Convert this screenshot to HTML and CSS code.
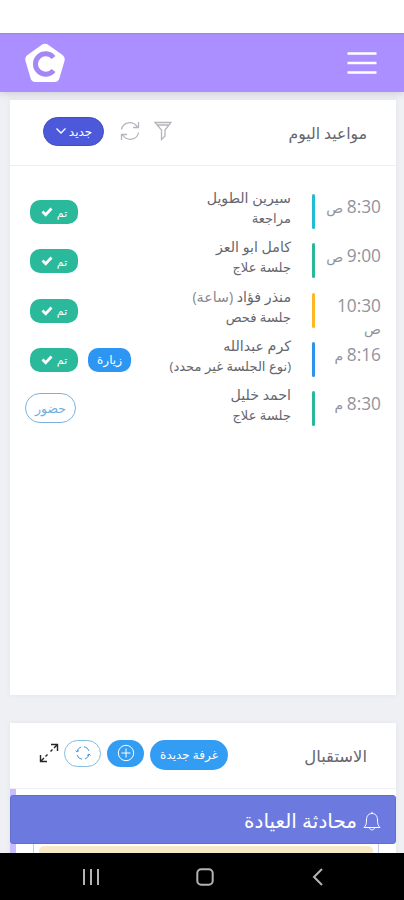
FILE: index.html
```html
<!DOCTYPE html>
<html lang="ar" dir="rtl">
<head>
<meta charset="utf-8">
<title>مواعيد اليوم</title>
<link rel="stylesheet" href="styles.css">
</head>
<body>
<header class="topbar">
  <svg class="menu" width="30" height="24" viewBox="0 0 30 24"><path d="M.5 2.500h29M.5 12h29M.5 21.500h29"/></svg>
  <svg class="logo" width="42" height="42" viewBox="0 0 42 42"><path class="shape" d="M17.500 3Q21 .5 24.500 3L38.500 13Q41.500 15.500 40.500 19L35.500 36Q34.500 40 30.500 40H11.500Q7.500 40 6.500 36L1.500 19Q.5 15.500 3.500 13Z"/><path class="letter" d="M29.500 15.500A10.200 10.200 0 1 0 29.500 28.500"/></svg>
</header>
<main>
  <section class="card appointments">
    <div class="card-head">
      <h2>مواعيد اليوم</h2>
      <div class="tools">
        <svg class="filter" width="20" height="20" viewBox="0 0 20 20"><path d="M2 1.500H18L12 9V15L8.500 18.500V9Z M4 4H16"/></svg>
        <svg class="reload" width="20" height="20" viewBox="0 0 20 20"><path d="M1.500 8.500C3 .5 13 -.5 17.500 6M18.500 1V6.500H13M18.500 11.500C17 19.500 7 20.500 2.500 14M1.500 19V13.500H7"/></svg>
        <button class="new"><span>جديد</span><svg width="12" height="8" viewBox="0 0 12 8"><path d="M1.500 1.500L6 6L10.500 1.500"/></svg></button>
      </div>
    </div>
    <div class="list">
      <div class="row"><div class="time"><b>8:30</b> ص</div><i class="bar cyan"></i><div class="info"><p class="name">سيرين الطويل</p><p>مراجعة</p></div><div class="actions"><span class="done">تم <svg width="12" height="10" viewBox="0 0 12 10"><path d="M1.500 4.500L4.700 7.700L10.500 1.500"/></svg></span></div></div>
      <div class="row"><div class="time"><b>9:00</b> ص</div><i class="bar green"></i><div class="info"><p class="name">كامل ابو العز</p><p>جلسة علاج</p></div><div class="actions"><span class="done">تم <svg width="12" height="10" viewBox="0 0 12 10"><path d="M1.500 4.500L4.700 7.700L10.500 1.500"/></svg></span></div></div>
      <div class="row"><div class="time"><b>10:30</b> ص</div><i class="bar amber"></i><div class="info"><p class="name">منذر فؤاد <em>(ساعة)</em></p><p>جلسة فحص</p></div><div class="actions"><span class="done">تم <svg width="12" height="10" viewBox="0 0 12 10"><path d="M1.500 4.500L4.700 7.700L10.500 1.500"/></svg></span></div></div>
      <div class="row"><div class="time"><b>8:16</b> م</div><i class="bar blue"></i><div class="info"><p class="name">كرم عبدالله</p><p>(نوع الجلسة غير محدد)</p></div><div class="actions"><span class="visit">زيارة</span><span class="done">تم <svg width="12" height="10" viewBox="0 0 12 10"><path d="M1.500 4.500L4.700 7.700L10.500 1.500"/></svg></span></div></div>
      <div class="row"><div class="time"><b>8:30</b> م</div><i class="bar green"></i><div class="info"><p class="name">احمد خليل</p><p>جلسة علاج</p></div><div class="actions"><span class="attend">حضور</span></div></div>
    </div>
  </section>
  <section class="card reception">
    <div class="card-head">
      <h2>الاستقبال</h2>
      <div class="tools">
        <button class="room">غرفة جديدة</button>
        <button class="pill add"><svg width="18" height="18" viewBox="0 0 18 18"><circle cx="9" cy="9" r="7.700"/><path d="M4.500 9H13.500M9 4.500V13.500"/></svg></button>
        <button class="pill sync"><svg width="16" height="16" viewBox="0 0 16 16"><path d="M2 6.500A6.300 6.300 0 0 1 6 2M9 1.700A6.300 6.300 0 0 1 14 6M14 9.500A6.300 6.300 0 0 1 10 14M7 14.300A6.300 6.300 0 0 1 2 10M.5 5.500L2 7L4 5.500M12 10.500L14 9L15.500 10.500"/></svg></button>
        <svg class="expand" width="20" height="20" viewBox="0 0 20 20"><path d="M11.500 8.500L13.500 6.500M15 5L18 2M12 1.500H18.500V8M8.500 11.500L6.500 13.500M5 15L2 18M1.500 12V18.500H8"/></svg>
      </div>
    </div>
    <div class="chat">
      <div class="chat-title"><svg width="18" height="20" viewBox="0 0 18 20"><path d="M9 .8V2.500M1 16.500H17C15 14.500 14.500 13 14.500 9C14.500 5 12.500 2.500 9 2.500S3.500 5 3.500 9C3.500 13 3 14.500 1 16.500ZM6.500 17C7 19.500 11 19.500 11.500 17"/></svg><span>محادثة العيادة</span></div>
      <div class="chat-body"><div class="note"></div></div>
    </div>
  </section>
</main>
<nav class="navbar" dir="ltr">
  <svg width="18" height="18" viewBox="0 0 18 18"><path d="M2 1V17M9 1V17M16 1V17"/></svg>
  <svg width="18" height="18" viewBox="0 0 18 18"><rect x="1.300" y="1.300" width="15.400" height="15.400" rx="4"/></svg>
  <svg width="18" height="18" viewBox="0 0 18 18"><path d="M13 1L5 9L13 17"/></svg>
</nav>
</body>
</html>
```
FILE: styles.css
```css
* { box-sizing: border-box; }
body { margin: 0; width: 404px; height: 900px; overflow: hidden; background: #eff0f4; font-family: "Open Sans", "DejaVu Sans", sans-serif; color: #65666e; display: flex; flex-direction: column; }
svg { fill: none; stroke: currentColor; flex: none; display: block; }
h2, p { margin: 0; font-weight: 400; white-space: nowrap; }
button { border: 0; font: inherit; padding: 0; display: flex; align-items: center; justify-content: center; white-space: nowrap; }
.topbar { flex: none; height: 92px; padding: 34px 27px 0 24px; background: linear-gradient(#fff 33px, #9d82ea 33px, #ab8eff 35px); display: flex; align-items: center; justify-content: space-between; box-shadow: 0 1px 8px rgba(60,60,80,.22); color: #fff; }
.menu { stroke-width: 2.6; }
.logo .shape { fill: #fff; stroke: none; }
.logo .letter { stroke: #a487f5; stroke-width: 5; }
main { height: 761px; overflow: hidden; padding: 8px 8px 0 10px; display: flex; flex-direction: column; gap: 28px; }
.card { flex: none; background: #fff; box-shadow: 0 0 5px rgba(80,80,110,.07); }
.appointments { height: 595px; }
.card-head { height: 66px; border-bottom: 1px solid #eeeef2; display: flex; justify-content: space-between; padding: 0 29px 0 33px; align-items: center; }
h2 { font-size: 15.6px; }
.tools { display: flex; align-items: center; }
.appointments .tools { gap: 13px; color: #b4b5bd; padding-bottom: 3px; }
.filter, .reload { stroke-width: 1.3; }
.new { width: 61px; height: 29px; border-radius: 15px; background: #4c59da; border: 1px solid #414dbd; color: #fff; gap: 2px; font-size: 12px; margin-right: 3px; }
.new svg { stroke-width: 1.4; }
.list { padding-top: 18px; }
.row { display: flex; height: 49.300px; padding: 0 15px; }
.time { width: 62px; font-size: 14px; color: #92939c; line-height: 22px; padding-top: 12px; }
.time b { font-size: 17.3px; font-weight: 400; }
.bar { width: 3px; height: 35px; border-radius: 2px; margin: 10px 4px 0 21px; }
.cyan { background: #22bdd5; }
.green { background: #29b99a; }
.amber { background: #ffb822; }
.blue { background: #2f92ee; }
.info { width: 125px; font-size: 13.1px; line-height: 20px; padding-top: 4px; }
.info .name { font-size: 14.2px; }
.info em { font-style: normal; color: #85868e; }
.actions { flex: 1; display: flex; justify-content: flex-end; align-items: flex-start; padding: 16px 0 0 5px; gap: 10px; font-size: 11px; white-space: nowrap; }
.done, .visit { height: 24px; border-radius: 10px; color: #fff; display: flex; align-items: center; justify-content: center; }
.done { width: 48px; background: #2ab99a; gap: 4px; }
.done svg { stroke-width: 2.8; }
.visit { width: 43px; background: #2d96f3; font-size: 12px; }
.attend { width: 51px; height: 30px; margin: -4px 0 0 -5px; border: 1px solid #79b2e1; border-radius: 15px; color: #72afe0; display: flex; align-items: center; justify-content: center; font-size: 12.5px; }
.reception { height: 200px; }
.reception h2 { font-size: 16.4px; }
.reception .card-head { padding-left: 29px; }
.reception .tools { gap: 6px; padding-bottom: 2px; }
.room { width: 78px; height: 30px; border-radius: 15px; background: #339cf3; color: #fff; font-size: 12px; }
.pill { width: 37px; height: 27px; border-radius: 14px; margin-bottom: 3px; }
.add { background: #339cf3; color: #fff; }
.sync { background: #fff; border: 1px solid #85bce0; color: #479bdd; }
.expand { color: #25252a; stroke-width: 1.4; margin: 0 -1px 3px 0; }
.chat { border-left: 6px solid #c7bdff; padding-top: 6px; }
.chat-title { height: 49px; margin-left: -6px; background: #6c7ae0; border: 1px solid #6270cd; border-radius: 3px; color: #fff; display: flex; align-items: center; gap: 6px; padding: 2px 14px 0; font-size: 20px; }
.chat-body { margin: 0 17px; height: 60px; border: 1px solid #c9c7ed; border-width: 0 1px; padding: 2px 5px; }
.note { height: 40px; background: #f7eac9; border-radius: 5px; }
.navbar { flex: none; height: 47px; background: #000; color: #b4b4b4; display: flex; align-items: center; justify-content: space-between; padding: 0 77px 0 82px; }
.navbar svg { stroke-width: 2; }
```
